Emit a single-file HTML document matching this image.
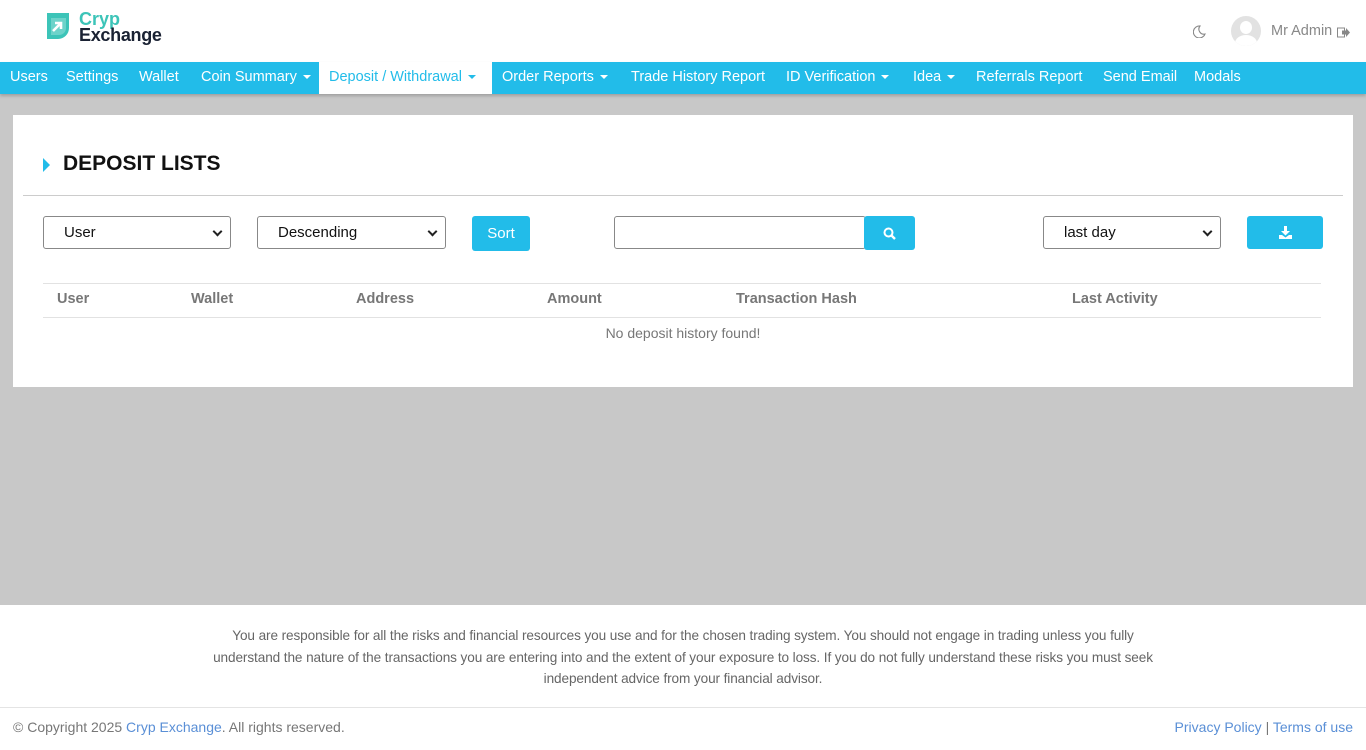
<!DOCTYPE html>
<html><head><meta charset="utf-8"><style>
*{box-sizing:border-box;margin:0;padding:0}
body{width:1366px;height:750px;background:#c8c8c8;font-family:"Liberation Sans",sans-serif;position:relative;overflow:hidden}
.hdr{position:absolute;left:0;top:0;width:1366px;height:62px;background:#fff}
.nav{position:absolute;left:0;top:62px;width:1366px;height:32px;background:#22bce9;box-shadow:0 2px 3px rgba(0,0,0,.2)}
.nav span{position:absolute;top:0;height:32px;line-height:30px;color:#fff;font-size:14.5px;white-space:nowrap}
.nav .act{background:#fff;color:#22bce9;padding:0 10px}
.car{display:inline-block;border-left:4px solid transparent;border-right:4px solid transparent;border-top:4px solid currentColor;vertical-align:middle;margin-left:6px}
.card{position:absolute;left:13px;top:115px;width:1340px;height:272px;background:#fff}
.sel{position:absolute;height:33px;border:1px solid #888;border-radius:3px;background:#fff;font-size:15px;line-height:31px;padding-left:20px;color:#111}
.sel.dd:after{content:"";position:absolute;right:9px;top:11px;width:5px;height:5px;border-right:2px solid #222;border-bottom:2px solid #222;transform:rotate(45deg)}
.btn{position:absolute;background:#22bce9;border-radius:3px;color:#fff;font-size:15px;text-align:center}
.th{position:absolute;top:176px;font-size:14.5px;font-weight:bold;color:#777}
.foot{position:absolute;left:0;top:605px;width:1366px;height:145px;background:#fff}
</style></head><body>
<div class="hdr">
 <svg style="position:absolute;left:45px;top:12px" width="26" height="28" viewBox="0 0 26 28"><path d="M2 1h22v15a11 11 0 0 1-11 11H2z" fill="#3cc4b8"/><path d="M6 6h15v10a7 7 0 0 1-7 7H6z" fill="#fff" opacity=".25"/><path d="M8 19l8-8M10 11h6v6" stroke="#fff" stroke-width="2.6" fill="none"/></svg>
 <div style="position:absolute;left:79px;top:11px;font-size:18px;line-height:17px;font-weight:bold;color:#3cc4b8">Cryp</div>
 <div style="position:absolute;left:79px;top:27px;font-size:18px;line-height:17px;font-weight:bold;color:#1a2233;letter-spacing:-0.3px">Exchange</div>
 <svg style="position:absolute;left:1193px;top:25px" width="13" height="13" viewBox="0 0 13 13"><path d="M7 1a6 6 0 1 0 5 8A5 5 0 0 1 7 1z" fill="none" stroke="#888" stroke-width="1.1"/></svg>
 <div style="position:absolute;left:1231px;top:16px;width:30px;height:30px;border-radius:50%;background:#e2e2e2;overflow:hidden"><div style="position:absolute;left:9px;top:5px;width:12px;height:13px;border-radius:50%;background:#fff"></div><div style="position:absolute;left:4px;top:19px;width:22px;height:16px;border-radius:50%;background:#fff"></div></div>
 <div style="position:absolute;left:1271px;top:23px;font-size:14.5px;color:#888">Mr Admin</div>
 <svg style="position:absolute;left:1337px;top:27px" width="13" height="11" viewBox="0 0 13 11"><rect x=".5" y="1" width="7" height="9" fill="none" stroke="#888"/><path d="M5 3.5h4V1l4 4.5-4 4.5V7.5H5z" fill="#888"/></svg>
</div>
<div class="nav">
 <span style="left:10px">Users</span><span style="left:66px">Settings</span><span style="left:139px">Wallet</span>
 <span style="left:201px">Coin Summary<i class="car"></i></span>
 <span class="act" style="left:319px;width:173px">Deposit / Withdrawal<i class="car"></i></span>
 <span style="left:502px">Order Reports<i class="car"></i></span>
 <span style="left:631px">Trade History Report</span>
 <span style="left:786px">ID Verification<i class="car"></i></span>
 <span style="left:913px">Idea<i class="car"></i></span>
 <span style="left:976px">Referrals Report</span><span style="left:1103px">Send Email</span><span style="left:1194px">Modals</span>
</div>
<div class="card">
 <div style="position:absolute;left:30px;top:43px;border-top:7px solid transparent;border-bottom:7px solid transparent;border-left:7px solid #22bce9"></div>
 <div style="position:absolute;left:50px;top:37px;font-size:21px;font-weight:bold;color:#111">DEPOSIT LISTS</div>
 <div style="position:absolute;left:10px;top:80px;width:1320px;border-top:1px solid #ccc"></div>
 <div class="sel dd" style="left:30px;top:101px;width:188px">User</div>
 <div class="sel dd" style="left:244px;top:101px;width:189px">Descending</div>
 <div class="btn" style="left:459px;top:101px;width:58px;height:35px;line-height:35px">Sort</div>
 <div class="sel" style="left:601px;top:101px;width:252px;padding:0"></div>
 <div class="btn" style="left:851px;top:101px;width:51px;height:34px">
  <svg style="margin-top:11px" width="13" height="13" viewBox="0 0 13 13"><circle cx="5.5" cy="5.5" r="4" fill="none" stroke="#fff" stroke-width="2"/><path d="M8.5 8.5l3.5 3.5" stroke="#fff" stroke-width="2.4"/></svg></div>
 <div class="sel dd" style="left:1030px;top:101px;width:178px">last day</div>
 <div class="btn" style="left:1234px;top:101px;width:76px;height:33px">
  <svg style="margin-top:10px" width="13" height="13" viewBox="0 0 13 13"><path d="M5 0h3v5h3l-4.5 4.5L2 5h3z M0 9h3l3.5 2.5L10 9h3v4H0z" fill="#fff"/></svg></div>
 <div style="position:absolute;left:30px;top:168px;width:1278px;border-top:1px solid #e2e2e2"></div>
 <div style="position:absolute;left:30px;top:202px;width:1278px;border-top:1px solid #e2e2e2"></div>
 <div class="th" style="left:44px">User</div><div class="th" style="left:178px">Wallet</div><div class="th" style="left:343px">Address</div><div class="th" style="left:534px">Amount</div><div class="th" style="left:723px">Transaction Hash</div><div class="th" style="left:1059px">Last Activity</div>
 <div style="position:absolute;left:0;width:1340px;top:210px;text-align:center;font-size:14px;color:#777">No deposit history found!</div>
</div>
<div class="foot">
 <div style="position:absolute;left:198px;width:970px;top:20px;text-align:center;font-size:13.6px;line-height:21.5px;color:#666;letter-spacing:-0.1px">You are responsible for all the risks and financial resources you use and for the chosen trading system. You should not engage in trading unless you fully understand the nature of the transactions you are entering into and the extent of your exposure to loss. If you do not fully understand these risks you must seek independent advice from your financial advisor.</div>
 <div style="position:absolute;left:0;top:102px;width:1366px;border-top:1px solid #e4e4e4"></div>
 <div style="position:absolute;left:13px;top:114px;font-size:14px;color:#777">© Copyright 2025 <span style="color:#5a8fd6">Cryp Exchange</span>. All rights reserved.</div>
 <div style="position:absolute;right:13px;top:114px;font-size:14px;color:#5a8fd6">Privacy Policy <span style="color:#777">|</span> Terms of use</div>
</div>
</body></html>
